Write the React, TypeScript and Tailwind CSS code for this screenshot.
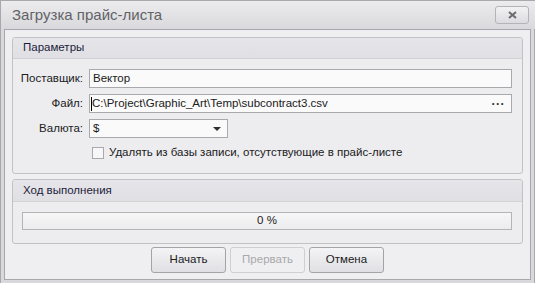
import React from "react";

function Label({ children }: { children: React.ReactNode }) {
  return <div className="w-[66px] pr-[3px] text-right text-[11.5px] text-[#202020] shrink-0">{children}</div>;
}

export default function App() {
  return (
    <div className="w-[535px] h-[283px] bg-[#cfcfd3] overflow-hidden" style={{ fontFamily: "'Liberation Sans', Arial, sans-serif" }}>
      <div className="flex flex-col h-full border-l border-t border-[#a9a9ad]">
        {/* title bar */}
        <div className="h-[28px] shrink-0 bg-gradient-to-b from-[#ececee] to-[#d9d9dd] flex items-center pl-[11px] relative">
          <span className="text-[15px] text-[#626266]">Загрузка прайс-листа</span>
          <div className="absolute left-[494px] top-[5px] w-[34px] h-[18px] rounded-[3px] border border-[#b4b4b8] bg-gradient-to-b from-[#f2f2f4] to-[#dcdce0] flex items-center justify-center">
            <svg width="9" height="8" viewBox="0 0 9 8">
              <path d="M1 1 L8 7 M8 1 L1 7" stroke="#6a6a70" strokeWidth="2" />
            </svg>
          </div>
        </div>
        <div className="flex flex-1 bg-[#d9d9dd]">
          <div className="w-[3px] shrink-0" />
          {/* content panel */}
          <div className="w-[527px] h-[251px] shrink-0 bg-[#efeff1] border border-[#a8a8ac] px-[7px] pt-[7px] flex flex-col">
            {/* group 1 */}
            <div className="h-[137px] shrink-0 rounded-[3px] border border-[#c2c2c6] bg-[#ededf0] flex flex-col overflow-hidden">
              <div className="h-[21px] shrink-0 bg-gradient-to-b from-[#e6e6ea] to-[#e0e0e4] border-b border-[#d2d2d6] flex items-center pl-[10px] text-[11.5px] text-[#1c1c3a]">
                Параметры
              </div>
              <div className="flex flex-col pt-[10px] pl-[7px] gap-[6px]">
                <div className="flex items-center h-[19px] gap-[3px]">
                  <Label>Поставщик:</Label>
                  <div className="w-[423px] h-[19px] bg-[#fafafa] border border-[#a9a9ad] flex items-center pl-[3px] text-[11.5px] text-[#202020]">
                    Вектор
                  </div>
                </div>
                <div className="flex items-center h-[19px] gap-[3px]">
                  <Label>Файл:</Label>
                  <div className="w-[423px] h-[19px] bg-[#fafafa] border border-[#a9a9ad] flex items-center pl-[1px] text-[11.5px] text-[#202020] relative">
                    <span className="w-[1px] h-[14px] bg-black" />
                    <span>C:\Project\Graphic_Art\Temp\subcontract3.csv</span>
                    <span className="absolute right-[6px] top-[0px] text-[12px] font-bold tracking-[0.5px] text-[#303030]">···</span>
                  </div>
                </div>
                <div className="flex items-center h-[19px] gap-[3px]">
                  <Label>Валюта:</Label>
                  <div className="w-[139px] h-[19px] bg-[#fafafa] border border-[#a9a9ad] flex items-center justify-between pl-[3px] pr-[6px] text-[11.5px] text-[#202020]">
                    <span>$</span>
                    <svg width="8" height="4" viewBox="0 0 8 4">
                      <path d="M0 0 L8 0 L4 4 Z" fill="#303030" />
                    </svg>
                  </div>
                </div>
                <div className="flex items-center h-[12px] mt-[3px] pl-[72px] gap-[5px]">
                  <div className="w-[12px] h-[12px] border border-[#a9a9ad] bg-[#f7f7f8]" />
                  <span className="text-[11.5px] text-[#202020]">Удалять из базы записи, отсутствующие в прайс-листе</span>
                </div>
              </div>
            </div>
            {/* group 2 */}
            <div className="mt-[5px] h-[65px] shrink-0 rounded-[3px] border border-[#c2c2c6] bg-[#ededf0] flex flex-col overflow-hidden">
              <div className="h-[22px] shrink-0 bg-gradient-to-b from-[#e6e6ea] to-[#e0e0e4] border-b border-[#d2d2d6] flex items-center pl-[10px] text-[11.5px] text-[#1c1c3a]">
                Ход выполнения
              </div>
              <div className="pt-[10px] pl-[9px]">
                <div className="w-[490px] h-[18px] border border-[#b4b4b8] bg-gradient-to-b from-[#f6f6f7] to-[#ececee] flex items-center justify-center text-[11.5px] text-[#202020]">
                  0 %
                </div>
              </div>
            </div>
            {/* buttons */}
            <div className="flex justify-center gap-[4px] mt-[3px]">
              <button className="w-[75px] h-[26px] rounded-[3px] border border-[#a4a4a8] bg-gradient-to-b from-[#f4f4f6] to-[#e0e0e4] text-[11.5px] text-[#202020]">Начать</button>
              <button className="w-[75px] h-[26px] rounded-[3px] border border-[#cfcfd3] bg-[#efeff1] text-[11.5px] text-[#a8a8ac]">Прервать</button>
              <button className="w-[75px] h-[26px] rounded-[3px] border border-[#a4a4a8] bg-gradient-to-b from-[#f4f4f6] to-[#e0e0e4] text-[11.5px] text-[#202020]">Отмена</button>
            </div>
          </div>
          <div className="flex-1 border-r border-[#a9a9ad]" />
        </div>
      </div>
    </div>
  );
}
